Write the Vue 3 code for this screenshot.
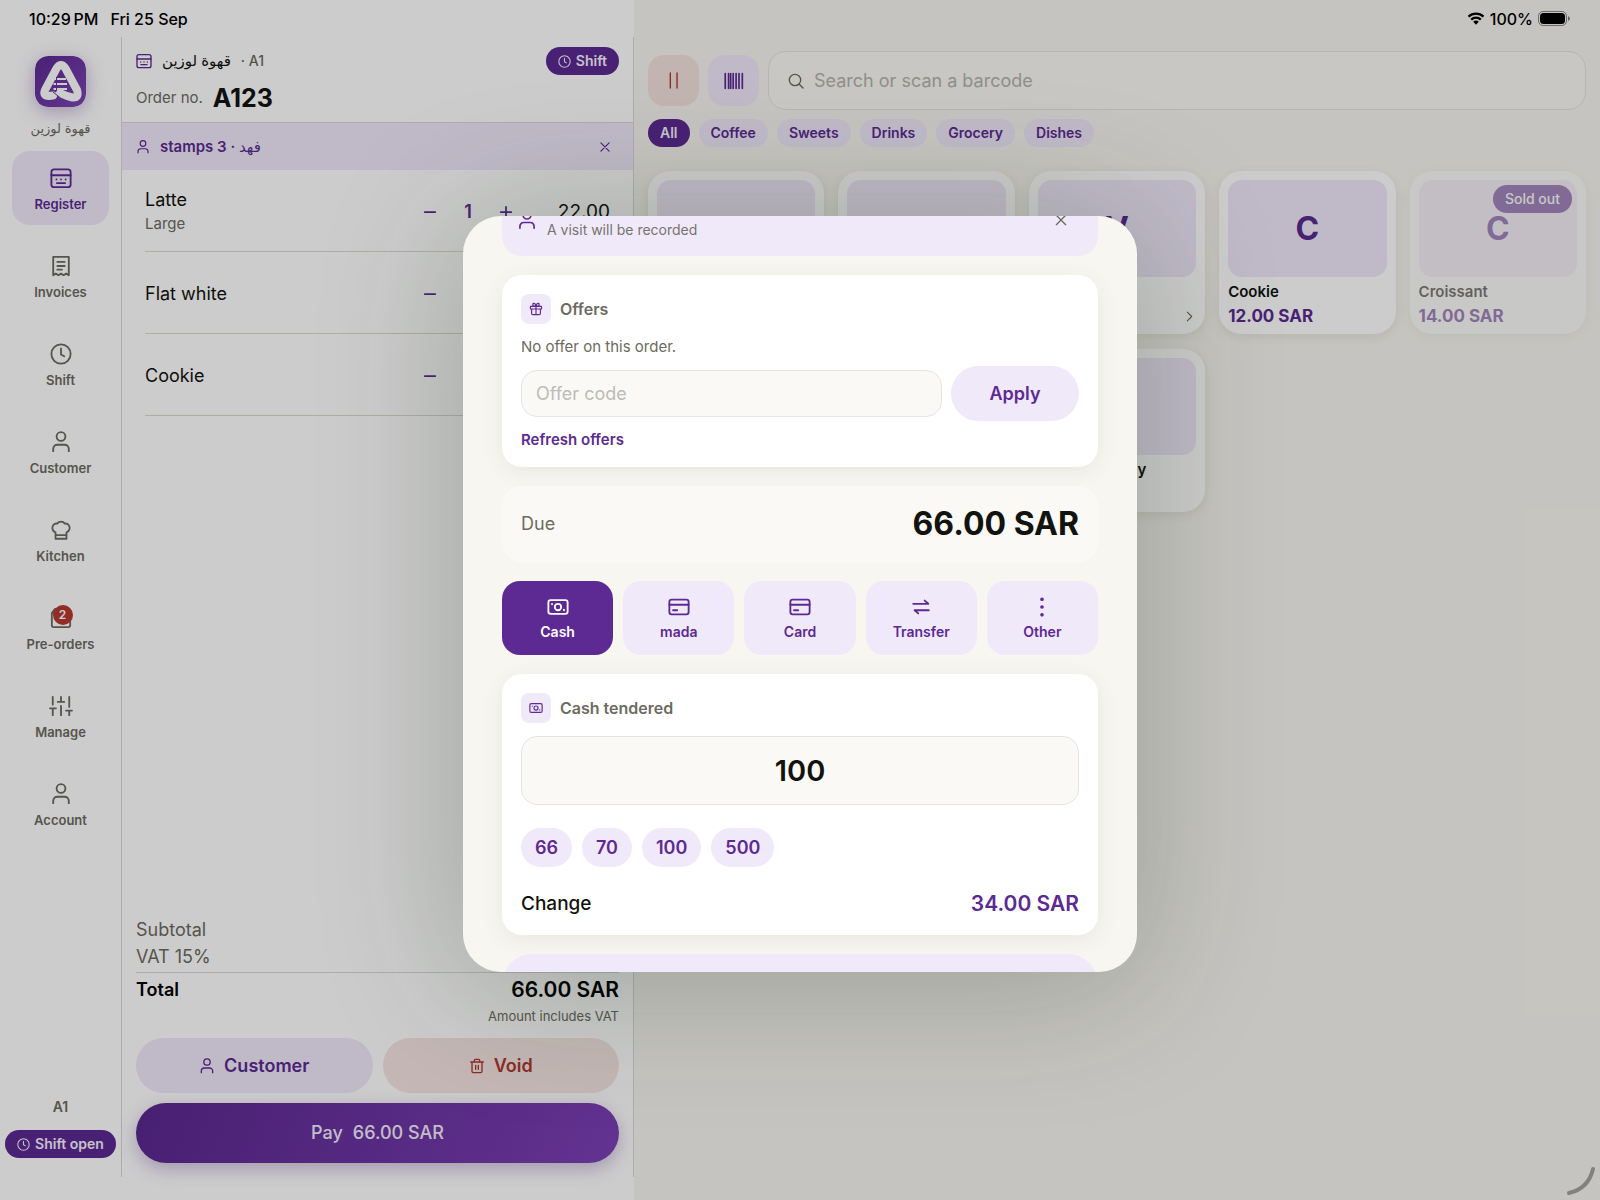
<script setup>
import { onMounted, ref } from 'vue'

const icons = {
  register: '<rect x="1.500" y="2.500" width="21" height="19.500" rx="3"/><path d="M1.500 9h21M7 13.500h.01M12 13.500h.01M17 13.500h.01M7.500 17.500h9"/>',
  invoice: '<path d="M3.500 2h17v20l-2.800-1.700L14.800 22 12 20.300 9.200 22l-2.900-1.700L3.500 22zM8 7.500h8M8 12h8M8 16h5"/>',
  clock: '<circle cx="12" cy="12" r="10.500"/><path d="M12 6v6.500l3.500 2"/>',
  user: '<circle cx="12" cy="6" r="4.800"/><path d="M3.500 22v-2.500a4.500 4.500 0 0 1 4.500-4.500h8a4.500 4.500 0 0 1 4.500 4.500V22"/>',
  chef: '<path d="M6 21.500v-7A5 5 0 0 1 3.500 6.800a4.700 4.700 0 0 1 4.300-1.800 5.300 5.300 0 0 1 8.400 0 4.700 4.700 0 0 1 4.300 1.800A5 5 0 0 1 18 14.500v7zM6 17.500h12"/>',
  bag: '<path d="M2 6.500 5.500 2h13L22 6.500V20a2 2 0 0 1-2 2H4a2 2 0 0 1-2-2zM2 6.500h20"/>',
  sliders: '<path d="M3 2v8.500M3 14.500V22M12 2v5.500M12 12v10M21 2v11M21 17v5M0 14.500h6.500M8.500 7.500h7M17.500 17H24"/>',
  trash: '<path d="M2.500 6h19M8 6V3.500A1.500 1.500 0 0 1 9.500 2h5A1.500 1.500 0 0 1 16 3.500V6M4.500 6v14A2 2 0 0 0 6.500 22h11a2 2 0 0 0 2-2V6M10 11v6M14 11v6"/>',
  close: '<path d="M5 5l14 14M19 5 5 19"/>',
  minus: '<path d="M3 12h18"/>',
  plus: '<path d="M3 12h18M12 3v18"/>',
  search: '<circle cx="10.500" cy="10.500" r="8.500"/><path d="m16.500 16.500 6 6"/>',
  pause: '<path d="M7.500 1.500v21M17 1.500v21"/>',
  barcode: '<path d="M1.500 3v18M5.500 3v18M8 3v18M11 3v18M14.500 3v18M18 3v18M22 3v18"/>',
  chevron: '<path d="m8 4 8 8-8 8"/>',
  gift: '<path d="M2.500 7.500h19v4.500h-19zM4.500 12v7.500a2 2 0 0 0 2 2h11a2 2 0 0 0 2-2V12M12 7.500v14M12 7.500C9 7.500 6.500 6.500 6.500 4.300 6.500 1.500 11 1 12 7.500 13 1 17.500 1.500 17.500 4.300 17.500 6.500 15 7.500 12 7.500z"/>',
  cash: '<rect x="1.500" y="4.500" width="21" height="15" rx="2.500"/><circle cx="12" cy="12" r="3.500"/><path d="M5.500 8.500v.500M18.500 15v.500"/>',
  card: '<rect x="1.500" y="4" width="21" height="16" rx="2.500"/><path d="M1.500 9.500h21M5.500 15.500h4.500"/>',
  transfer: '<path d="M3.500 8.500h16.500l-4-3.500M20.500 15.500H5l4 3.500"/>',
  more: '<path d="M12 3.500v.010M12 12v.010M12 20.500v.010"/>'
}

const nav = [
  { label: 'Register', icon: 'register', active: true },
  { label: 'Invoices', icon: 'invoice' },
  { label: 'Shift', icon: 'clock' },
  { label: 'Customer', icon: 'user' },
  { label: 'Kitchen', icon: 'chef' },
  { label: 'Pre-orders', icon: 'bag', badge: 2 },
  { label: 'Manage', icon: 'sliders' },
  { label: 'Account', icon: 'user' }
]

const lines = [
  { name: 'Latte', note: 'Large', qty: 1, price: '22.00' },
  { name: 'Flat white', qty: 1, price: '32.00' },
  { name: 'Cookie', qty: 1, price: '12.00' }
]

const categories = ['All', 'Coffee', 'Sweets', 'Drinks', 'Grocery', 'Dishes']

const products = [
  { name: 'Latte', price: '18.00', options: true },
  { name: 'Flat white', price: '16.00' },
  { name: 'V60', letter: 'V', price: '20.00', options: true },
  { name: 'Cookie', letter: 'C', price: '12.00' },
  { name: 'Croissant', letter: 'C', price: '14.00', soldOut: true },
  { name: 'Water', price: '2.00' },
  { name: 'Beans', price: '60.00' },
  { name: 'Dish of the day', letter: 'D', price: '35.00' }
]

const methods = [
  { label: 'Cash', icon: 'cash' },
  { label: 'mada', icon: 'card' },
  { label: 'Card', icon: 'card' },
  { label: 'Transfer', icon: 'transfer' },
  { label: 'Other', icon: 'more' }
]

const quickAmounts = [66, 70, 100, 500]
const category = ref('All')
const method = ref('Cash')
const tendered = ref('100')
const offerCode = ref('')
const search = ref('')
const sheet = ref(null)

onMounted(() => {
  sheet.value.scrollTop = 56
})
</script>

<template>
  <div class="app">
    <div class="left">
      <header class="status">
        <span>10:29&#8201;PM</span>
        <span>Fri 25 Sep</span>
      </header>
      <div class="left-body">
        <nav class="sidebar">
          <svg class="logo" viewBox="0 0 51 51">
            <defs>
              <linearGradient id="logo-fill" x1="0" y1="0" x2="1" y2="1">
                <stop offset="0" stop-color="#5c2993" />
                <stop offset="1" stop-color="#7c45b4" />
              </linearGradient>
            </defs>
            <rect width="51" height="51" rx="13" fill="url(#logo-fill)" />
            <path d="M18 39.500 14 40Q7.500 40 10 34L21.500 12.500Q26 5.500 30.500 12.500L42 34Q44.500 42 37.500 41.500Q32 40.500 25 37" fill="none" stroke="#fff" stroke-width="8" stroke-linecap="round" stroke-linejoin="round" />
            <path d="M18 36 25 41.500" fill="none" stroke="#66339d" stroke-width="1" />
            <path d="M19 23h12M18.500 28h13.500M18.500 33h13.500" stroke="#fff" stroke-width="2.200" />
            <path d="M21.500 21v13.500" stroke="#66339d" stroke-width="1" />
          </svg>
          <span class="brand" lang="ar">قهوة لوزين</span>
          <ul class="nav">
            <li v-for="item in nav" :key="item.label">
              <button type="button" class="nav-item" :class="{ active: item.active }">
                <span class="nav-icon">
                  <svg class="icon i22" viewBox="0 0 24 24" v-html="icons[item.icon]"></svg>
                  <span v-if="item.badge" class="badge">{{ item.badge }}</span>
                </span>
                {{ item.label }}
              </button>
            </li>
          </ul>
          <span class="till">A1</span>
          <span class="pill"><svg class="icon i13" viewBox="0 0 24 24" v-html="icons.clock"></svg>Shift open</span>
        </nav>

        <section class="order">
          <header class="order-head">
            <div class="head-row">
              <svg class="icon i16 accent" viewBox="0 0 24 24" v-html="icons.register"></svg>
              <span class="shop" lang="ar">قهوة لوزين</span>
              <span class="device">· A1</span>
              <button type="button" class="pill push"><svg class="icon i13" viewBox="0 0 24 24" v-html="icons.clock"></svg>Shift</button>
            </div>
            <div class="number-row">
              <span class="muted">Order no.</span>
              <strong class="number">A123</strong>
            </div>
          </header>
          <div class="member">
            <svg class="icon i14" viewBox="0 0 24 24" v-html="icons.user"></svg>
            <span>stamps 3 · <span class="member-name" lang="ar">فهد</span></span>
            <button type="button" class="bare push" aria-label="Remove customer"><svg class="icon i14" viewBox="0 0 24 24" v-html="icons.close"></svg></button>
          </div>
          <ul class="lines">
            <li v-for="line in lines" :key="line.name" class="line">
              <div class="line-name">
                <span>{{ line.name }}</span>
                <small v-if="line.note">{{ line.note }}</small>
              </div>
              <div class="stepper">
                <button type="button" class="bare" aria-label="Less"><svg class="icon i14" viewBox="0 0 24 24" v-html="icons.minus"></svg></button>
                <span>{{ line.qty }}</span>
                <button type="button" class="bare" aria-label="More"><svg class="icon i14" viewBox="0 0 24 24" v-html="icons.plus"></svg></button>
              </div>
              <span class="line-price">{{ line.price }}</span>
            </li>
          </ul>
          <footer class="summary">
            <div class="sum-row"><span>Subtotal</span><span>57.39</span></div>
            <div class="sum-row"><span>VAT 15%</span><span>8.61</span></div>
            <div class="total-row"><span>Total</span><strong>66.00 SAR</strong></div>
            <span class="vat-note">Amount includes VAT</span>
            <div class="actions">
              <button type="button" class="soft"><svg class="icon i16" viewBox="0 0 24 24" v-html="icons.user"></svg>Customer</button>
              <button type="button" class="soft danger"><svg class="icon i16" viewBox="0 0 24 24" v-html="icons.trash"></svg>Void</button>
            </div>
            <button type="button" class="pay"><span>Pay</span><span>66.00 SAR</span></button>
          </footer>
        </section>
      </div>
    </div>

    <main class="catalog">
      <header class="status end">
        <svg class="wifi" viewBox="0 0 18 13"><path d="M1.500 4.600a11 11 0 0 1 15 0M4.200 7.600a7 7 0 0 1 9.600 0" fill="none" stroke="#000" stroke-width="2.200" /><path d="M6.200 9.800a4.200 4.200 0 0 1 5.600 0L9 12.800z" /></svg>
        <span>100%</span>
        <svg class="battery" viewBox="0 0 32 15"><rect x=".5" y=".5" width="28" height="14" rx="4.500" fill="none" stroke="#000" stroke-opacity=".45" /><rect x="2" y="2" width="25" height="11" rx="3.500" /><path d="M30 5v5q2-1 2-2.500T30 5z" fill-opacity=".5" /></svg>
      </header>
      <div class="tools">
        <button type="button" class="tool danger" aria-label="Hold"><svg class="icon i17" viewBox="0 0 24 24" v-html="icons.pause"></svg></button>
        <button type="button" class="tool" aria-label="Scan"><svg class="icon i20" viewBox="0 0 24 24" v-html="icons.barcode"></svg></button>
        <label class="search">
          <svg class="icon i16" viewBox="0 0 24 24" v-html="icons.search"></svg>
          <input v-model="search" type="search" aria-label="Search" placeholder="Search or scan a barcode" />
        </label>
      </div>
      <div class="chips">
        <button v-for="c in categories" :key="c" type="button" class="chip" :class="{ active: c === category }" @click="category = c">{{ c }}</button>
      </div>
      <div class="grid">
        <article v-for="p in products" :key="p.name" class="product" :class="{ out: p.soldOut }">
          <div class="thumb">{{ p.letter }}</div>
          <h3>{{ p.name }}</h3>
          <p><span>{{ p.price }} SAR</span><svg v-if="p.options" class="icon i13" viewBox="0 0 24 24" v-html="icons.chevron"></svg></p>
          <span v-if="p.soldOut" class="sold">Sold out</span>
        </article>
      </div>
    </main>

    <div class="overlay">
      <div class="dialog" role="dialog" aria-label="Payment">
        <div ref="sheet" class="sheet">
          <section class="visit">
            <svg class="icon i20 accent" viewBox="0 0 24 24" v-html="icons.user"></svg>
            <small>A visit will be recorded</small>
            <button type="button" class="bare push" aria-label="Remove"><svg class="icon i16" viewBox="0 0 24 24" v-html="icons.close"></svg></button>
          </section>

          <section class="card offers">
            <h2><span class="tag"><svg class="icon i14" viewBox="0 0 24 24" v-html="icons.gift"></svg></span>Offers</h2>
            <p class="hint">No offer on this order.</p>
            <div class="offer-row">
              <input v-model="offerCode" type="text" aria-label="Offer code" placeholder="Offer code" />
              <button type="button" class="soft apply">Apply</button>
            </div>
            <a href="#" class="refresh">Refresh offers</a>
          </section>

          <section class="due"><span>Due</span><strong>66.00 SAR</strong></section>

          <div class="methods">
            <button v-for="m in methods" :key="m.label" type="button" class="method" :class="{ active: m.label === method }" @click="method = m.label">
              <svg class="icon i22" :class="{ heavy: m.icon === 'more' }" viewBox="0 0 24 24" v-html="icons[m.icon]"></svg>
              {{ m.label }}
            </button>
          </div>

          <section class="card">
            <h2><span class="tag"><svg class="icon i14" viewBox="0 0 24 24" v-html="icons.cash"></svg></span>Cash tendered</h2>
            <input v-model="tendered" class="amount" type="text" inputmode="decimal" aria-label="Cash tendered" />
            <div class="quick">
              <button v-for="q in quickAmounts" :key="q" type="button" @click="tendered = String(q)">{{ q }}</button>
            </div>
            <div class="change"><span>Change</span><strong>34.00 SAR</strong></div>
          </section>

          <button type="button" class="confirm" aria-label="Add payment"></button>
        </div>
      </div>
    </div>

    <svg class="corner" viewBox="0 0 30 30"><path d="M27 3C24 16 16 24 3 27" fill="none" stroke="#82817e" stroke-width="4" stroke-linecap="round" /></svg>
  </div>
</template>

<style>
body {
  margin: 0;
  background: #f8f6f0;
}
</style>

<style scoped>
.app {
  --purple: #5c2a92;
  --lilac: #f0e9fa;
  --muted: #6c6b60;
  --ink: #12120e;
  --rule: #d9d9d9;
  position: relative;
  display: flex;
  min-height: 100vh;
  overflow: hidden;
  font-family: Inter, "Noto Sans", "DejaVu Sans", sans-serif;
  font-size: 14px;
  line-height: 20px;
  color: var(--ink);
}

.app *,
.app *::before {
  box-sizing: border-box;
}

button,
input {
  margin: 0;
  padding: 0;
  border: 0;
  background: none;
  font: inherit;
  color: inherit;
}

ul,
h2,
h3,
p {
  margin: 0;
  padding: 0;
  list-style: none;
}

.icon {
  flex: none;
  overflow: visible;
  fill: none;
  stroke: currentColor;
  stroke-width: 2;
  stroke-linecap: round;
  stroke-linejoin: round;
}
.i13 { width: 13px; height: 13px; }
.i14 { width: 14px; height: 14px; }
.i16 { width: 16px; height: 16px; }
.i17 { width: 17px; height: 17px; }
.i20 { width: 20px; height: 20px; }
.i22 { width: 22px; height: 22px; }
.heavy { stroke-width: 4; }
.accent { color: var(--purple); }
.push { margin-left: auto; }
.bare { display: grid; place-items: center; }

/* Left side */
.left {
  flex: none;
  display: flex;
  flex-direction: column;
  background: #fff;
}

.status {
  display: flex;
  align-items: center;
  gap: 12px;
  height: 37px;
  padding: 0 29px;
  font-size: 16px;
  font-weight: 500;
  color: #000;
}
.status.end {
  justify-content: flex-end;
  gap: 5px;
  padding: 0 30px;
}
.wifi { width: 18px; height: 13px; }
.battery { width: 32px; height: 15px; }

.left-body {
  flex: 1;
  display: flex;
  padding-bottom: 23px;
}

.sidebar {
  display: flex;
  flex-direction: column;
  align-items: center;
  width: 122px;
  padding-top: 19px;
  padding-bottom: 19px;
  border-right: 1px solid var(--rule);
}
.logo {
  flex: none;
  width: 51px;
  height: 51px;
  border-radius: 13px;
  box-shadow: 0 4px 18px rgba(92, 42, 146, 0.35);
}
.brand {
  margin-top: 11px;
  font-size: 13px;
  color: var(--muted);
}
.nav {
  display: flex;
  flex-direction: column;
  gap: 14px;
  margin-top: 13px;
}
.nav-item {
  display: flex;
  flex-direction: column;
  align-items: center;
  justify-content: center;
  gap: 5px;
  width: 97px;
  height: 74px;
  padding-top: 4px;
  border-radius: 18px;
  font-size: 13px;
  font-weight: 600;
  color: var(--muted);
}
.nav-item.active {
  background: var(--lilac);
  color: var(--purple);
}
.nav-icon {
  position: relative;
  display: grid;
}
.badge {
  position: absolute;
  left: 3px;
  top: -2px;
  width: 20px;
  height: 20px;
  border-radius: 10px;
  background: #b8372f;
  color: #fff;
  font-size: 12px;
  text-align: center;
}
.till {
  margin-top: auto;
  font-weight: 600;
  color: var(--muted);
}
.pill {
  display: flex;
  align-items: center;
  gap: 5px;
  height: 28px;
  padding: 0 12px;
  border-radius: 14px;
  background: var(--purple);
  color: #f8f2ff;
  font-weight: 600;
  white-space: nowrap;
}
.sidebar .pill { margin-top: 13px; }

/* Order */
.order {
  display: flex;
  flex-direction: column;
  width: 32vw;
  border-right: 1px solid var(--rule);
}
.order-head {
  height: 85px;
  padding: 10px 14px 0;
}
.head-row {
  display: flex;
  align-items: center;
  height: 28px;
}
.shop {
  margin-left: 10px;
  font-size: 15px;
  font-weight: 500;
}
.device {
  margin-left: 10px;
  font-weight: 500;
  color: var(--muted);
}
.number-row {
  display: flex;
  align-items: center;
  gap: 10px;
  height: 46px;
}
.muted {
  font-size: 15px;
  color: var(--muted);
}
.number {
  font-size: 25px;
  font-weight: 700;
}
.member {
  display: flex;
  align-items: center;
  gap: 10px;
  height: 48px;
  padding: 0 21px 0 14px;
  border-top: 1px solid var(--rule);
  background: var(--lilac);
  color: var(--purple);
  font-size: 15px;
  font-weight: 600;
}
.member-name { font-weight: 500; }
.lines { padding: 0 14px 0 23px; }
.line {
  display: flex;
  align-items: center;
  height: 82px;
  padding-top: 2px;
  padding-right: 9px;
  border-bottom: 1px solid #dbd9d0;
  font-size: 19px;
}
.line-name {
  display: flex;
  flex-direction: column;
  flex: 1;
  gap: 4px;
  font-size: 18px;
}
.line-name small {
  font-size: 15px;
  color: var(--muted);
}
.stepper {
  display: grid;
  grid-template-columns: repeat(3, 38px);
  place-items: center;
  color: var(--purple);
  font-size: 18px;
  font-weight: 600;
}
.stepper .icon { stroke-width: 3; }
.line-price {
  width: 85px;
  text-align: right;
}
.summary {
  display: flex;
  flex-direction: column;
  margin-top: auto;
  padding: 0 14px 14px;
}
.sum-row,
.total-row {
  display: flex;
  justify-content: space-between;
  align-items: center;
  height: 27px;
  font-size: 18px;
  color: var(--muted);
}
.total-row {
  height: 34px;
  margin-top: 2px;
  border-top: 1px solid var(--rule);
  font-weight: 600;
  color: #000;
}
.total-row strong {
  font-size: 21px;
  font-weight: 600;
}
.vat-note {
  align-self: flex-end;
  font-size: 13px;
  color: var(--muted);
}
.actions {
  display: flex;
  gap: 10px;
  margin: 12px 0 10px;
}
.soft {
  flex: 1;
  display: flex;
  align-items: center;
  justify-content: center;
  gap: 9px;
  height: 55px;
  border-radius: 28px;
  background: var(--lilac);
  color: var(--purple);
  font-size: 18px;
  font-weight: 600;
}
.danger {
  background: #f6e5e3;
  color: #ae3830;
}
.pay {
  display: flex;
  align-items: center;
  justify-content: center;
  gap: 10px;
  height: 60px;
  border-radius: 30px;
  background: linear-gradient(110deg, #5a288f, #7c40b5);
  box-shadow: 0 6px 18px rgba(92, 42, 146, 0.3);
  color: #f4edfc;
  font-size: 18px;
  font-weight: 500;
}

/* Catalog */
.catalog {
  flex: 1;
  min-width: 0;
  background: #f8f6f0;
}
.tools {
  display: flex;
  align-items: center;
  gap: 9px;
  padding: 14px 14px 0;
}
.tool {
  display: grid;
  place-items: center;
  width: 51px;
  height: 51px;
  border-radius: 16px;
  background: var(--lilac);
  color: var(--purple);
}
.tool.danger {
  background: #f3e2dd;
  color: #b23e33;
}
.search {
  flex: 1;
  display: flex;
  align-items: center;
  gap: 10px;
  height: 59px;
  padding: 0 19px;
  border: 1px solid #e5e3dd;
  border-radius: 18px;
  background: #fbf9f4;
  font-size: 18px;
}
.search .icon { color: var(--muted); }
.search input {
  flex: 1;
  min-width: 0;
  outline: none;
}
input::placeholder {
  color: #bdbcb8;
  opacity: 1;
}
.search input::placeholder { color: #b5b3ae; }
.chips {
  display: flex;
  gap: 9px;
  padding: 9px 14px 0;
}
.chip {
  height: 28px;
  padding: 0 12px;
  border-radius: 14px;
  background: var(--lilac);
  color: var(--purple);
  font-weight: 600;
}
.chip.active {
  background: var(--purple);
  color: #f8f2ff;
}
.grid {
  display: grid;
  grid-template-columns: repeat(5, 1fr);
  gap: 15px 14px;
  padding: 24px 14px;
}
.product {
  position: relative;
  height: 163px;
  padding: 9px;
  border-radius: 22px;
  background: #fff;
  box-shadow: 0 3px 12px rgba(60, 60, 40, 0.1);
}
.product.out { opacity: 0.55; }
.thumb {
  display: grid;
  place-items: center;
  height: 97px;
  border-radius: 14px;
  background: var(--lilac);
  color: var(--purple);
  font-size: 32px;
  font-weight: 700;
}
.product h3 {
  margin-top: 5px;
  font-size: 15px;
  font-weight: 600;
}
.product p {
  display: flex;
  justify-content: space-between;
  align-items: center;
  margin-top: 4px;
  font-size: 17px;
  font-weight: 700;
  color: var(--purple);
}
.product p .icon { color: var(--muted); }
.sold {
  position: absolute;
  top: 14px;
  right: 14px;
  height: 28px;
  padding: 4px 12px;
  border-radius: 14px;
  background: var(--purple);
  color: #fff;
  font-size: 14px;
  font-weight: 500;
}

/* Payment dialog */
.overlay {
  position: absolute;
  inset: 0;
  display: flex;
  align-items: center;
  justify-content: center;
  padding-bottom: 12px;
  background: rgba(0, 0, 0, 0.2);
}
.dialog {
  width: min(674px, 92vw);
  height: 63vh;
  border-radius: 38px;
  overflow: hidden;
  box-shadow: 0 10px 140px rgba(20, 45, 15, 0.26);
}
.sheet {
  display: flex;
  flex-direction: column;
  gap: 19px;
  height: 100%;
  padding: 24px 39px;
  overflow-y: auto;
  scrollbar-width: none;
  background: #f7f6f0;
}
.sheet > * { flex: none; }
.visit {
  display: flex;
  align-items: center;
  gap: 10px;
  height: 72px;
  padding: 0 29px 0 15px;
  border-radius: 20px;
  background: var(--lilac);
}
.visit small {
  padding-top: 20px;
  font-size: 14px;
  color: #77746f;
}
.visit .bare { color: var(--muted); }
.card {
  display: flex;
  flex-direction: column;
  padding: 19px;
  border-radius: 20px;
  background: #fff;
  box-shadow: 0 5px 22px rgba(60, 60, 40, 0.08);
}
.offers { padding-bottom: 17px; }
.card h2 {
  display: flex;
  align-items: center;
  gap: 9px;
  font-size: 16px;
  font-weight: 600;
  color: var(--muted);
}
.tag {
  display: grid;
  place-items: center;
  width: 30px;
  height: 30px;
  border-radius: 8px;
  background: var(--lilac);
  color: var(--purple);
}
.hint {
  margin-top: 13px;
  font-size: 15px;
  color: var(--muted);
}
.offer-row {
  display: flex;
  align-items: center;
  gap: 9px;
  margin-top: 9px;
}
.card input {
  border: 1px solid #e5e4de;
  border-radius: 16px;
  background: #faf9f5;
  outline: none;
}
.offer-row input {
  flex: 1;
  min-width: 0;
  height: 47px;
  padding: 0 14px;
  font-size: 18px;
}
.apply {
  flex: none;
  width: 128px;
}
.refresh {
  align-self: flex-start;
  margin-top: 9px;
  font-size: 15px;
  font-weight: 600;
  color: var(--purple);
  text-decoration: none;
}
.due {
  display: flex;
  align-items: center;
  justify-content: space-between;
  height: 76px;
  padding: 0 19px;
  border-radius: 20px;
  background: #faf9f5;
  font-size: 18px;
  color: var(--muted);
}
.due strong {
  font-size: 32px;
  font-weight: 700;
  color: var(--ink);
}
.methods {
  display: grid;
  grid-template-columns: repeat(5, 1fr);
  gap: 10px;
}
.method {
  display: flex;
  flex-direction: column;
  align-items: center;
  justify-content: center;
  gap: 4px;
  height: 74px;
  padding-top: 2px;
  border-radius: 18px;
  background: var(--lilac);
  color: var(--purple);
  font-size: 14px;
  font-weight: 600;
}
.method.active {
  background: var(--purple);
  color: #fff;
}
.card .amount {
  height: 69px;
  margin-top: 13px;
  font-size: 29px;
  font-weight: 600;
  text-align: center;
}
.quick {
  display: flex;
  gap: 10px;
  margin-top: 23px;
}
.quick button {
  height: 39px;
  padding: 0 14px;
  border-radius: 20px;
  background: var(--lilac);
  color: var(--purple);
  font-size: 18px;
  font-weight: 600;
}
.change {
  display: flex;
  justify-content: space-between;
  align-items: center;
  height: 24px;
  margin-top: 25px;
  font-size: 19px;
  font-weight: 500;
}
.change strong {
  font-size: 21px;
  font-weight: 600;
  color: var(--purple);
}
.confirm {
  height: 60px;
  border-radius: 30px;
  background: var(--lilac);
}

.corner {
  position: absolute;
  right: 4px;
  bottom: 4px;
  width: 30px;
  height: 30px;
}
</style>
